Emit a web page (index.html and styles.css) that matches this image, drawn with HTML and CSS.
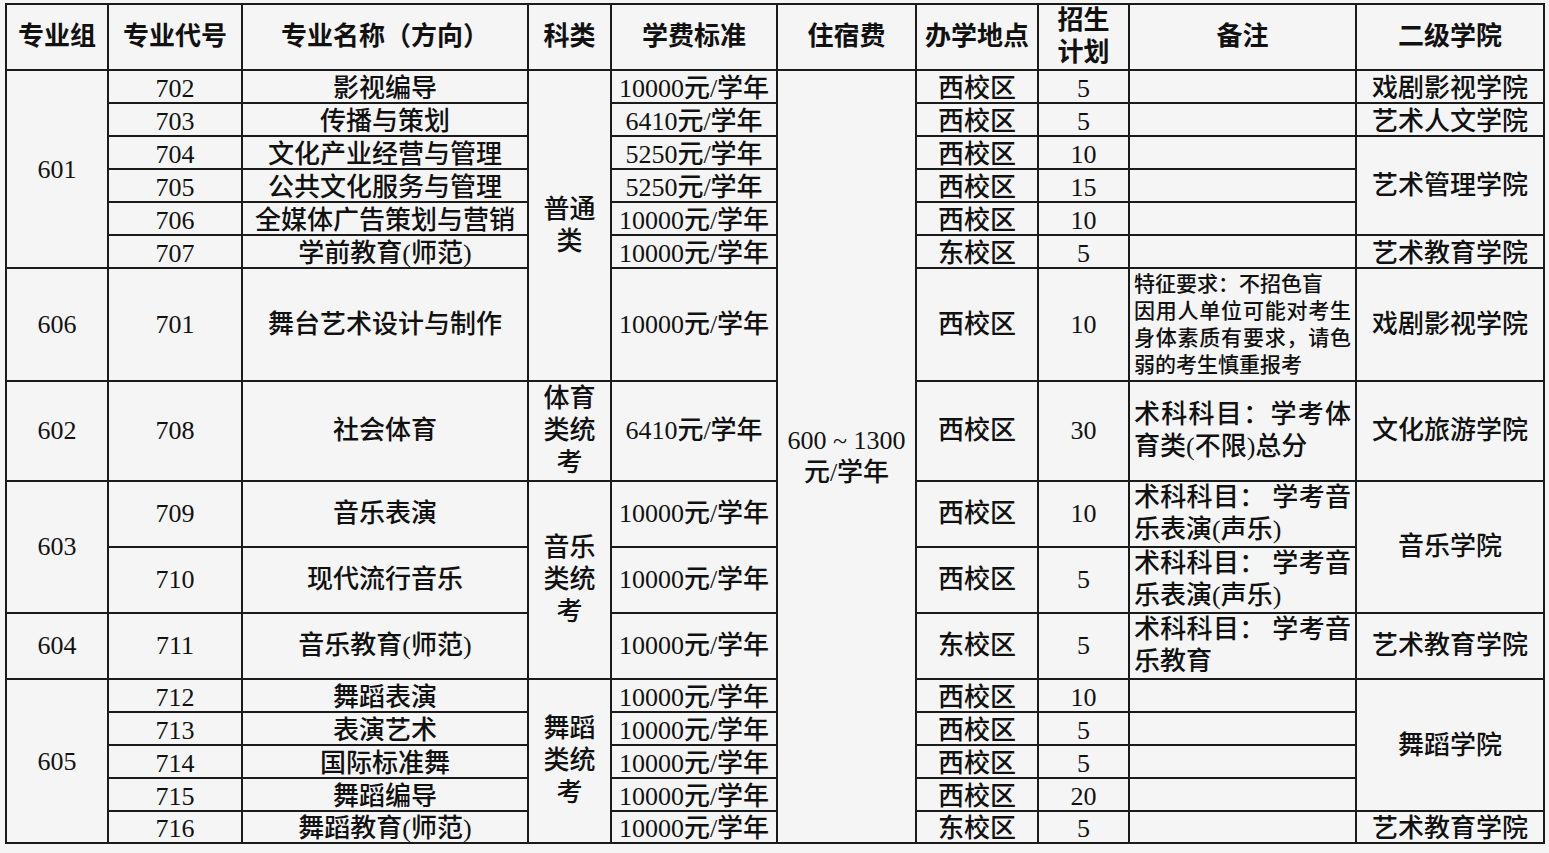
FILE: index.html
```html
<!DOCTYPE html>
<html lang="zh-CN">
<head>
<meta charset="utf-8">
<title>招生计划</title>
<link rel="stylesheet" href="styles.css">
</head>
<body>
<table class="plan">
  <colgroup>
    <col class="c-group">
    <col class="c-code">
    <col class="c-name">
    <col class="c-type">
    <col class="c-fee">
    <col class="c-dorm">
    <col class="c-site">
    <col class="c-num">
    <col class="c-note">
    <col class="c-college">
  </colgroup>
  <thead>
    <tr class="head">
      <th>专业组</th>
      <th>专业代号</th>
      <th>专业名称（方向）</th>
      <th>科类</th>
      <th>学费标准</th>
      <th>住宿费</th>
      <th>办学地点</th>
      <th>招生<br>计划</th>
      <th>备注</th>
      <th>二级学院</th>
    </tr>
  </thead>
  <tbody>
    <tr class="r1">
      <td rowspan="6">601</td>
      <td>702</td>
      <td>影视编导</td>
      <td class="type" rowspan="7">普通类</td>
      <td>10000元/学年</td>
      <td class="dorm" rowspan="16">600 ~ 1300<br>元/学年</td>
      <td>西校区</td>
      <td>5</td>
      <td class="note"></td>
      <td>戏剧影视学院</td>
    </tr>
    <tr class="r1">
      <td>703</td>
      <td>传播与策划</td>
      <td>6410元/学年</td>
      <td>西校区</td>
      <td>5</td>
      <td class="note"></td>
      <td>艺术人文学院</td>
    </tr>
    <tr class="r1">
      <td>704</td>
      <td>文化产业经营与管理</td>
      <td>5250元/学年</td>
      <td>西校区</td>
      <td>10</td>
      <td class="note"></td>
      <td rowspan="3">艺术管理学院</td>
    </tr>
    <tr class="r1">
      <td>705</td>
      <td>公共文化服务与管理</td>
      <td>5250元/学年</td>
      <td>西校区</td>
      <td>15</td>
      <td class="note"></td>
    </tr>
    <tr class="r1">
      <td>706</td>
      <td>全媒体广告策划与营销</td>
      <td>10000元/学年</td>
      <td>西校区</td>
      <td>10</td>
      <td class="note"></td>
    </tr>
    <tr class="r1">
      <td>707</td>
      <td>学前教育(师范)</td>
      <td>10000元/学年</td>
      <td>东校区</td>
      <td>5</td>
      <td class="note"></td>
      <td>艺术教育学院</td>
    </tr>
    <tr class="r606">
      <td>606</td>
      <td>701</td>
      <td>舞台艺术设计与制作</td>
      <td>10000元/学年</td>
      <td>西校区</td>
      <td>10</td>
      <td class="note small">特征要求：不招色盲<br>因用人单位可能对考生身体素质有要求，请色弱的考生慎重报考</td>
      <td>戏剧影视学院</td>
    </tr>
    <tr class="r602">
      <td>602</td>
      <td>708</td>
      <td>社会体育</td>
      <td class="type">体育类统考</td>
      <td>6410元/学年</td>
      <td>西校区</td>
      <td>30</td>
      <td class="note">术科科目：学考体育类(不限)总分</td>
      <td>文化旅游学院</td>
    </tr>
    <tr class="r2">
      <td rowspan="2">603</td>
      <td>709</td>
      <td>音乐表演</td>
      <td class="type" rowspan="3">音乐类统考</td>
      <td>10000元/学年</td>
      <td>西校区</td>
      <td>10</td>
      <td class="note">术科科目： 学考音乐表演(声乐)</td>
      <td rowspan="2">音乐学院</td>
    </tr>
    <tr class="r2">
      <td>710</td>
      <td>现代流行音乐</td>
      <td>10000元/学年</td>
      <td>西校区</td>
      <td>5</td>
      <td class="note">术科科目： 学考音乐表演(声乐)</td>
    </tr>
    <tr class="r2">
      <td>604</td>
      <td>711</td>
      <td>音乐教育(师范)</td>
      <td>10000元/学年</td>
      <td>东校区</td>
      <td>5</td>
      <td class="note">术科科目： 学考音乐教育</td>
      <td>艺术教育学院</td>
    </tr>
    <tr class="r1">
      <td rowspan="5">605</td>
      <td>712</td>
      <td>舞蹈表演</td>
      <td class="type" rowspan="5">舞蹈类统考</td>
      <td>10000元/学年</td>
      <td>西校区</td>
      <td>10</td>
      <td class="note"></td>
      <td rowspan="4">舞蹈学院</td>
    </tr>
    <tr class="r1">
      <td>713</td>
      <td>表演艺术</td>
      <td>10000元/学年</td>
      <td>西校区</td>
      <td>5</td>
      <td class="note"></td>
    </tr>
    <tr class="r1">
      <td>714</td>
      <td>国际标准舞</td>
      <td>10000元/学年</td>
      <td>西校区</td>
      <td>5</td>
      <td class="note"></td>
    </tr>
    <tr class="r1">
      <td>715</td>
      <td>舞蹈编导</td>
      <td>10000元/学年</td>
      <td>西校区</td>
      <td>20</td>
      <td class="note"></td>
    </tr>
    <tr class="r1 last">
      <td>716</td>
      <td>舞蹈教育(师范)</td>
      <td>10000元/学年</td>
      <td>东校区</td>
      <td>5</td>
      <td class="note"></td>
      <td>艺术教育学院</td>
    </tr>
  </tbody>
</table>
</body>
</html>
```

FILE: styles.css
```css
html, body {
  background: #f5f5f5;
}

body {
  margin: 0;
  padding: 3px 0 0 5px;
  font-family: "Liberation Serif", "Noto Sans CJK SC", serif;
  color: #111111;
}

.plan {
  border-collapse: collapse;
  table-layout: fixed;
  width: 1538px;
}

.c-group { width: 102px; }
.c-code { width: 134px; }
.c-name { width: 286px; }
.c-type { width: 83px; }
.c-fee { width: 166px; }
.c-dorm { width: 139px; }
.c-site { width: 122px; }
.c-num { width: 91px; }
.c-note { width: 227px; }
.c-college { width: 188px; }

.plan th,
.plan td {
  border: 2px solid #1b1b1b;
  padding: 0;
  text-align: center;
  vertical-align: middle;
  font-size: 26px;
  line-height: 32px;
  font-weight: 500;
}

.plan th {
  font-weight: 700;
  line-height: 32px;
}

.head { height: 66px; }
.r1 { height: 33px; }
.r606 { height: 113px; }
.r602 { height: 100px; }
.r2 { height: 66px; }
.r1.last { height: 32px; }

.r1 > td {
  line-height: 27px;
}

.r1 > td:not([rowspan]) {
  padding-top: 4px;
}

.r1.last > td:not([rowspan]) {
  padding-top: 3px;
}

.plan td.type {
  padding: 0 13px;
  line-height: 32px;
}

.plan td.dorm {
  line-height: 32px;
}

.plan td.note {
  text-align: justify;
  padding: 0 4px;
}

.plan td.note.small {
  font-size: 21px;
  line-height: 27px;
}
```
